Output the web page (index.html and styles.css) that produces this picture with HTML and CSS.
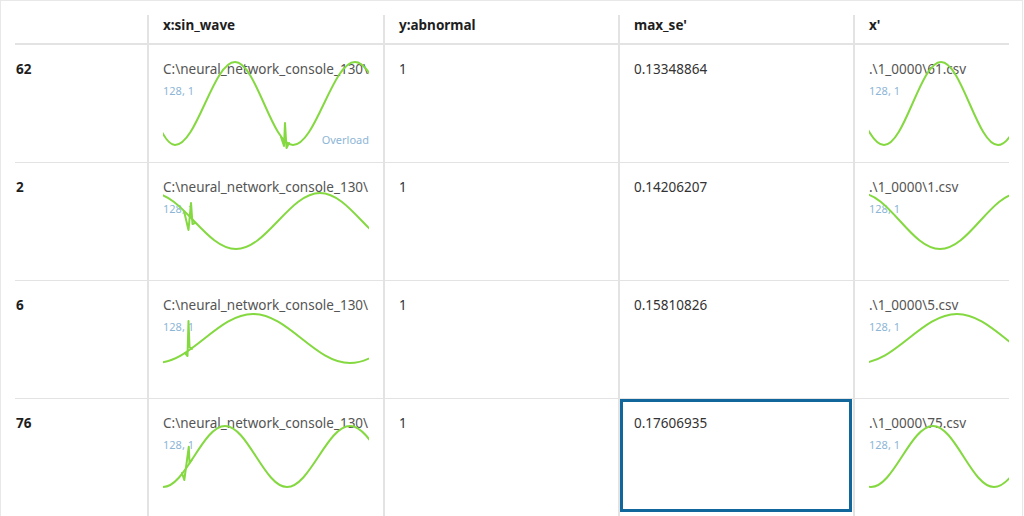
FILE: index.html
```html
<!DOCTYPE html>
<html>
<head>
<meta charset="utf-8">
<link rel="stylesheet" href="styles.css">
</head>
<body>
<div class="frame">
  <div class="viewport">
    <div class="grid">
      <div class="hcell idx"></div>
      <div class="hcell col">x:sin_wave</div>
      <div class="hcell col">y:abnormal</div>
      <div class="hcell col">max_se'</div>
      <div class="hcell col">x'</div>

      <!-- row 62 -->
      <div class="cell idx">62</div>
      <div class="cell col">
        <div class="path">C:\neural_network_console_130\</div>
        <div class="shape">128, 1</div>
        <div class="flag">Overload</div>
        <svg class="wave" width="206" height="117" viewBox="0 0 206 117"><path d="M -42 17 C -21.3 17 -5.8 100 12 100 C 33.8 100 50.2 17 72 17 C 93.1 17 108.9 100 130 100 C 152.6 100 169.4 17 192 17 C 213.8 17 230.2 100 252 100"/><path d="M 118 92 L 121 101 L 122 78 L 123.5 103 L 126 98"/></svg>
      </div>
      <div class="cell col"><div class="val">1</div></div>
      <div class="cell col"><div class="val">0.13348864</div></div>
      <div class="cell col">
        <div class="path">.\1_0000\61.csv</div>
        <div class="shape">128, 1</div>
        <svg class="wave" width="206" height="117" viewBox="0 0 206 117"><path d="M -42 17 C -21.3 17 -5.7 100 15 100 C 35.7 100 51.3 17 72 17 C 92.7 17 108.3 100 129 100 C 149.7 100 165.3 17 186 17"/></svg>
      </div>

      <!-- row 2 -->
      <div class="cell idx">2</div>
      <div class="cell col">
        <div class="path">C:\neural_network_console_130\</div>
        <div class="shape">128, 1</div>
        <svg class="wave" width="206" height="117" viewBox="0 0 206 117"><path d="M -11 30 C 19.6 30 42.4 86 73 86 C 103.6 86 126.4 30 157 30 C 187.6 30 210.4 86 241 86"/><path d="M 21 48 L 25.5 67 L 28 40 L 29.5 61 L 32 60"/></svg>
      </div>
      <div class="cell col"><div class="val">1</div></div>
      <div class="cell col"><div class="val">0.14206207</div></div>
      <div class="cell col">
        <div class="path">.\1_0000\1.csv</div>
        <div class="shape">128, 1</div>
        <svg class="wave" width="206" height="117" viewBox="0 0 206 117"><path d="M -9 30 C 20.1 30 41.9 86 71 86 C 100.1 86 121.9 30 151 30 C 180.1 30 201.9 86 231 86"/></svg>
      </div>

      <!-- row 6 -->
      <div class="cell idx">6</div>
      <div class="cell col">
        <div class="path">C:\neural_network_console_130\</div>
        <div class="shape">128, 1</div>
        <svg class="wave" width="206" height="117" viewBox="0 0 206 117"><path d="M -7 82 C 28.3 82 54.7 33 90 33 C 125.3 33 151.7 82 187 82 C 222.3 82 248.7 33 284 33"/><path d="M 22 72 L 24.5 75 L 25.5 40 L 26.5 66 L 29 68"/></svg>
      </div>
      <div class="cell col"><div class="val">1</div></div>
      <div class="cell col"><div class="val">0.15810826</div></div>
      <div class="cell col">
        <div class="path">.\1_0000\5.csv</div>
        <div class="shape">128, 1</div>
        <svg class="wave" width="206" height="117" viewBox="0 0 206 117"><path d="M -9 82 C 26.3 82 52.7 33 88 33 C 123.3 33 149.7 82 185 82"/></svg>
      </div>

      <!-- row 76 -->
      <div class="cell idx">76</div>
      <div class="cell col">
        <div class="path">C:\neural_network_console_130\</div>
        <div class="shape">128, 1</div>
        <svg class="wave" width="206" height="117" viewBox="0 0 206 117"><path d="M -62 27 C -39.4 27 -22.6 88 0 88 C 22.6 88 39.4 27 62 27 C 84.6 27 101.4 88 124 88 C 146.9 88 164.1 27 187 27 C 209.6 27 226.4 88 249 88"/><path d="M 19 74 L 21.3 81 L 25.8 47.7 L 26.5 64 L 29 60.5"/></svg>
      </div>
      <div class="cell col"><div class="val">1</div></div>
      <div class="cell col sel"><div class="val">0.17606935</div></div>
      <div class="cell col">
        <div class="path">.\1_0000\75.csv</div>
        <div class="shape">128, 1</div>
        <svg class="wave" width="206" height="117" viewBox="0 0 206 117"><path d="M -60 27 C -37.4 27 -20.6 88 2 88 C 24.6 88 41.4 27 64 27 C 86.2 27 102.8 88 125 88 C 147.6 88 164.4 27 187 27"/></svg>
      </div>
    </div>
  </div>
</div>
</body>
</html>
```

FILE: styles.css
```css
html, body {
  margin: 0;
  padding: 0;
  background: #ffffff;
}

body {
  font-family: "Noto Sans", "Open Sans", sans-serif;
  font-size: 13.5px;
  color: #333333;
}

.frame {
  width: 1023px;
  height: 516px;
  box-sizing: border-box;
  border: 1px solid #e8e8e8;
  border-bottom: none;
  padding: 14px 0 0 14px;
  overflow: hidden;
}

.viewport {
  width: 994px;
  height: 501px;
  overflow: hidden;
}

.grid {
  display: grid;
  grid-template-columns: 132px 236px 235px 235px 236px;
  grid-auto-rows: 118px;
  grid-template-rows: 30px;
  width: max-content;
}

.hcell {
  box-sizing: border-box;
  height: 30px;
  border-bottom: 2px solid #e3e3e3;
  line-height: 20px;
  font-weight: 700;
  color: #1e1e1e;
  padding: 0 14px;
  white-space: nowrap;
}

.hcell.idx {
  padding: 0 1px;
}

.col {
  border-left: 2px solid #e3e3e3;
}

.cell {
  position: relative;
  box-sizing: border-box;
  height: 118px;
  border-bottom: 1px solid #e3e3e3;
  padding: 14px 14px 0 14px;
  overflow: hidden;
}

.cell.idx {
  padding-left: 1px;
  font-weight: 700;
  line-height: 20px;
  color: #1e1e1e;
}

.path {
  line-height: 20px;
  white-space: nowrap;
  overflow: hidden;
  color: #555555;
}

.val {
  line-height: 20px;
  white-space: nowrap;
  color: #333333;
}

.shape {
  margin-top: 4px;
  font-size: 11px;
  line-height: 16px;
  color: #8db6d6;
}

.flag {
  position: absolute;
  right: 14px;
  top: 87px;
  font-size: 11px;
  line-height: 16px;
  color: #8db6d6;
}

.wave {
  position: absolute;
  left: 14px;
  top: 0;
  overflow: hidden;
}

.wave path {
  fill: none;
  stroke: #84d840;
  stroke-width: 2;
  stroke-linejoin: round;
  stroke-linecap: round;
}

.sel::after {
  content: "";
  position: absolute;
  left: 0;
  top: 0;
  width: 232px;
  height: 113px;
  box-sizing: border-box;
  border: 3px solid #11669b;
}
```
